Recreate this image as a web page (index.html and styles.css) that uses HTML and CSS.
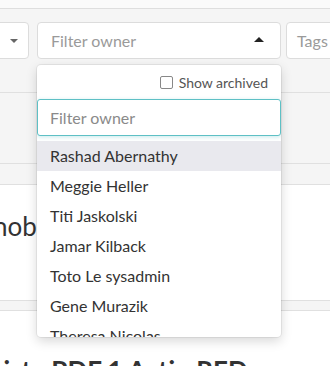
FILE: index.html
```html
<!DOCTYPE html>
<html lang="en">
<head>
    <meta charset="UTF-8">
    <meta name="viewport" content="width=device-width, initial-scale=1.0">
    <title>Documents</title>
    <link rel="stylesheet" href="styles.css">
</head>
<body>
    <div class="top-strip"></div>

    <div class="filter-bar">
        <div class="filter-row">
            <div class="select select-small">
                <span class="caret-down"></span>
            </div>

            <div class="owner-wrap">
                <div class="select select-owner">
                    <span class="placeholder">Filter owner</span>
                    <span class="caret-up"></span>
                </div>

                <!-- owner dropdown (open) -->
                <div class="dropdown">
                    <label class="archived">
                        <span class="checkbox"></span>
                        Show archived
                    </label>
                    <input class="dropdown-search" type="text" placeholder="Filter owner">
                    <ul class="owner-list">
                        <li class="active">Rashad Abernathy</li>
                        <li>Meggie Heller</li>
                        <li>Titi Jaskolski</li>
                        <li>Jamar Kilback</li>
                        <li>Toto Le sysadmin</li>
                        <li>Gene Murazik</li>
                        <li>Theresa Nicolas</li>
                    </ul>
                </div>
            </div>

            <div class="select select-tags">
                <span class="placeholder">Tags</span>
            </div>
        </div>
    </div>

    <div class="toolbar"></div>
    <div class="spacer"></div>

    <div class="card card-first">
        <h2 class="card-title">nob</h2>
    </div>

    <div class="card card-second">
        <h2 class="card-title bold">Liste PDF 1 Actio RED</h2>
    </div>
</body>
</html>
```

FILE: styles.css
```css
body {
    font-family: Lato, "Open Sans", sans-serif;
    background-color: #f5f5f5;
    color: #333;
    margin: 0;
    overflow: hidden;
}

.top-strip {
    height: 8px;
    background: #fafafa;
    border-bottom: 1px solid #dedede;
}

.filter-bar {
    height: 70px;
    padding-top: 13px;
    border-bottom: 1px solid #e0e0e0;
}

.filter-row {
    display: flex;
    height: 37px;
}

.select {
    flex-shrink: 0;
    box-sizing: border-box;
    height: 37px;
    background: white;
    border: 1px solid #dcdcdc;
    border-radius: 4px;
    display: flex;
    align-items: center;
    font-size: 16px;
}

.placeholder {
    color: #9a9a9a;
}

.select-small {
    width: 80px;
    margin-left: -51px;
    justify-content: flex-end;
    padding-right: 10px;
}

.caret-down {
    border-left: 4px solid transparent;
    border-right: 4px solid transparent;
    border-top: 4px solid #666;
}

.owner-wrap {
    flex-shrink: 0;
    position: relative;
    margin-left: 8px;
}

.select-owner {
    width: 244px;
    padding: 0 16px 0 13px;
    justify-content: space-between;
}

.caret-up {
    border-left: 5px solid transparent;
    border-right: 5px solid transparent;
    border-bottom: 5px solid #222;
    margin-top: -2px;
}

.select-tags {
    width: 80px;
    margin-left: 5px;
    padding-left: 10px;
}

.dropdown {
    position: absolute;
    top: 43px;
    left: 0;
    width: 244px;
    height: 272px;
    box-sizing: border-box;
    background: white;
    border-radius: 4px;
    box-shadow: 0px 4px 12px rgba(0, 0, 0, 0.16), 0 0 0 1px rgba(0, 0, 0, 0.06);
    overflow: hidden;
    z-index: 10;
}

.archived {
    display: flex;
    align-items: center;
    justify-content: flex-end;
    height: 34px;
    padding-right: 13px;
    font-size: 14px;
    color: #555;
}

.checkbox {
    width: 11px;
    height: 11px;
    border: 1px solid #888;
    border-radius: 2px;
    margin-right: 6px;
}

.dropdown-search {
    display: block;
    box-sizing: border-box;
    width: 100%;
    height: 37px;
    margin: 0;
    padding: 0 12px;
    border: 1.5px solid #5ec0c5;
    border-radius: 3px;
    box-shadow: 0 1px 4px rgba(94, 192, 197, 0.35);
    font-family: inherit;
    font-size: 16px;
    outline: none;
}

.dropdown-search::placeholder {
    color: #8a8a8a;
}

.owner-list {
    list-style: none;
    margin: 5px 0 0;
    padding: 0;
}

.owner-list li {
    height: 30px;
    line-height: 30px;
    padding-left: 13px;
    font-size: 16px;
    color: #333;
}

.owner-list li.active {
    background: #e9e9ee;
}

.toolbar {
    height: 70px;
    border-bottom: 1px solid #e0e0e0;
}

.spacer {
    height: 20px;
}

.card {
    background: white;
    border-top: 1px solid #e0e0e0;
    border-bottom: 1px solid #e0e0e0;
}

.card-first {
    height: 115px;
    margin-bottom: 9px;
}

.card-title {
    margin: 0;
    font-weight: normal;
    font-size: 26px;
}

.card-first .card-title {
    padding-top: 25px;
    margin-left: -7px;
}

.card-second .card-title {
    padding-top: 43px;
    margin-left: -10px;
}

.bold {
    font-weight: bold;
    font-size: 26px;
}
```
